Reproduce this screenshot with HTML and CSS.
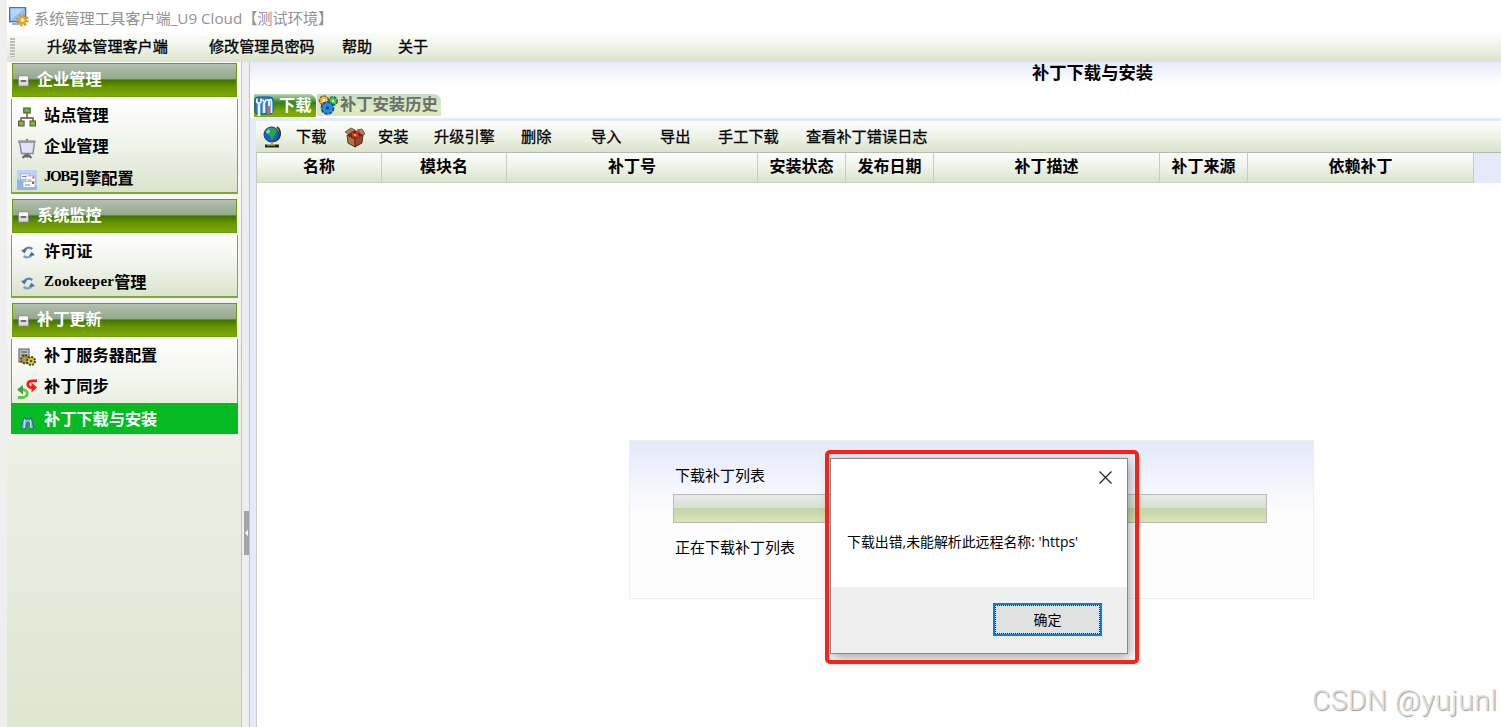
FILE: index.html
```
<!DOCTYPE html>
<html lang="zh-CN">
<head>
  <meta charset="UTF-8">
  <meta name="viewport" content="width=device-width, initial-scale=1.0">
  <title>系统管理工具客户端_U9 Cloud</title>
  <link rel="stylesheet" href="styles.css">
</head>
<body>

  <!-- shared icons -->
  <svg width="0" height="0" class="defs">
    <symbol id="minus" viewBox="0 0 12 12">
      <rect x="0.5" y="0.5" width="11" height="11" fill="#dcdcdc" stroke="#858585"/>
      <rect x="1" y="1" width="10" height="4" fill="#f6f6f6"/>
      <path d="M3 6h6" stroke="#333" stroke-width="1.4"/>
    </symbol>
    <symbol id="refresh" viewBox="0 0 16 14">
      <path d="M3 6C4 2 9 0 13 3" fill="none" stroke="#5b82c4" stroke-width="2.6"/>
      <path d="M0 4l7-1-3 5z" fill="#426cb3"/>
      <path d="M13 8c-1 4-6 6-10 3" fill="none" stroke="#7d9ed4" stroke-width="2.6"/>
      <path d="M16 10l-7 1 3-5z" fill="#426cb3"/>
    </symbol>
  </svg>

  <div class="window">
    <div class="titlebar">
      <svg class="app-icon" viewBox="0 0 20 20">
        <rect x="0.7" y="0.7" width="16" height="14" fill="#8dbcf8" stroke="#4169a8" stroke-width="1.2"/>
        <path d="M1.5 1.5h14L2 13z" fill="#b5d5ff"/>
        <path d="M3 17h8" stroke="#a9b0ba" stroke-width="2"/>
        <circle cx="13.5" cy="13.2" r="5" fill="none" stroke="#d79a12" stroke-width="2.4" stroke-dasharray="2 1.9"/>
        <circle cx="13.5" cy="13.2" r="3.2" fill="#f8dd7c" stroke="#dfa51b" stroke-width="2.2"/>
        <circle cx="13.5" cy="13.2" r="1.3" fill="#fff"/>
      </svg>
      <span>系统管理工具客户端_U9 Cloud【测试环境】</span>
    </div>

    <div class="menubar">
      <i class="grip"></i>
      <span>升级本管理客户端</span>
      <span>修改管理员密码</span>
      <span>帮助</span>
      <span>关于</span>
    </div>

    <div class="main">
      <div class="sidebar">
        <div class="group">
          <div class="group-head"><svg><use href="#minus"/></svg>企业管理</div>
          <div class="group-list">
            <div class="item">
              <svg viewBox="0 0 20 20">
                <rect width="20" height="20" fill="#fff"/>
                <path d="M10 6v5M4 14v-3h12v3" fill="none" stroke="#6b4a3a" stroke-width="1.4"/>
                <rect x="6.7" y="1" width="6.5" height="5" fill="#62b53a" stroke="#5b4a2c"/>
                <rect x="1.6" y="14" width="5.5" height="5" fill="#6cc23f" stroke="#5b4a2c"/>
                <rect x="13" y="14" width="5.5" height="5" fill="#6cc23f" stroke="#5b4a2c"/>
              </svg>
              站点管理
            </div>
            <div class="item">
              <svg viewBox="0 0 20 20">
                <path d="M10 0v2M10 14v3M5.5 19l3.5-3.5M14.5 19L11 15.5M6 17.5h8" stroke="#666" stroke-width="1.8" fill="none"/>
                <path d="M2.5 3h15l-1.5 11.5h-11.5z" fill="#dfe2fb" stroke="#84868f" stroke-width="1.4"/>
                <path d="M1 2.5h17.5" stroke="#9a9ba2" stroke-width="2.4"/>
              </svg>
              企业管理
            </div>
            <div class="item">
              <svg viewBox="0 0 20 20">
                <rect width="20" height="20" fill="#b9d4f5"/>
                <path d="M0 20V9l20 7v4z" fill="#8db5e8"/>
                <rect x="3.5" y="4" width="9" height="5.5" fill="#f3f7fd" stroke="#8da0bd" stroke-width=".6"/>
                <rect x="9" y="6" width="9.5" height="6" fill="#fff" stroke="#8da0bd" stroke-width=".6"/>
                <rect x="6" y="11.5" width="12" height="6" fill="#fbfcff" stroke="#8da0bd" stroke-width=".6"/>
                <path d="M15.5 7.5h2M15 13h2" stroke="#d8442c" stroke-width="1.8"/>
                <path d="M5 6.5h4M10.5 10h4M8 15h5" stroke="#6f87ad"/>
              </svg>
              <span class="tight">JOB</span>引擎配置
            </div>
          </div>
        </div>

        <div class="group">
          <div class="group-head"><svg><use href="#minus"/></svg>系统监控</div>
          <div class="group-list">
            <div class="item"><svg class="small"><use href="#refresh"/></svg>许可证</div>
            <div class="item"><svg class="small"><use href="#refresh"/></svg><span class="latin">Zookeeper</span>管理</div>
          </div>
        </div>

        <div class="group">
          <div class="group-head"><svg><use href="#minus"/></svg>补丁更新</div>
          <div class="group-list open">
            <div class="item">
              <svg viewBox="0 0 20 20">
                <rect x="2" y="2" width="10" height="13" fill="#c3c3c3" stroke="#555"/>
                <path d="M4 5h6M4 8h6" stroke="#444"/>
                <circle cx="8" cy="12.5" r="4" fill="#aaa043" stroke="#4d4612" stroke-width="2" stroke-dasharray="2 1.1"/>
                <circle cx="14" cy="14" r="4" fill="#d8cc50" stroke="#4d4612" stroke-width="2" stroke-dasharray="2 1.1"/>
                <circle cx="14" cy="14" r="1.3" fill="#5b5417"/>
              </svg>
              补丁服务器配置
            </div>
            <div class="item">
              <svg viewBox="0 0 20 20">
                <path d="M20 1.8h-4c-7 0-7 7 0 7" fill="none" stroke="#fb1818" stroke-width="2.8"/>
                <path d="M14.5 3.5l5.5 5-5.500 5z" fill="#fb1818"/>
                <path d="M1 18.500h4c7 0 7-8 0-8" fill="none" stroke="#63c64c" stroke-width="2.800"/>
                <path d="M6 6v9.500L0 10.500z" fill="#3da437"/>
              </svg>
              补丁同步
            </div>
            <div class="item active">
              <svg viewBox="0 0 20 20">
                <path d="M4.500 18l1-7 2-5 2 3 1-2 2 2 1-3 2 5 1 7h-3l-1-6-1.500-1-1.500 1-1 6z" fill="#8fb0e2" stroke="#315f9d"/>
                <path d="M7.500 9v8M13.500 9v8" stroke="#c6d8f5" stroke-width="1.200"/>
              </svg>
              补丁下载与安装
            </div>
          </div>
        </div>
      </div>

      <div class="splitter"><div class="handle"></div></div>

      <div class="content">
        <div class="top">
          <h1>补丁下载与安装</h1>
          <div class="tabs">
            <div class="tab selected">
              <svg viewBox="0 0 20 20">
                <rect x="1" y="1" width="18" height="17" rx="3" fill="#247bd5" stroke="#0c56b2"/>
                <path d="M5 7v13M10 7v10" stroke="#eef4fb" stroke-width="2.6"/>
                <path d="M2.800 2.500v3.500l2 1.500L7 6V2.500M8.500 3.500l2 3 2-3M13 4h5" fill="none" stroke="#eef4fb" stroke-width="1.800"/>
                <path d="M15 4v6M17.500 5v12" stroke="#fff" stroke-width="1.800"/>
                <path d="M14.500 10v8" stroke="#ef5927" stroke-width="3"/>
              </svg>
              <span>下载</span>
            </div>
            <div class="tab">
              <svg viewBox="0 0 20 20">
                <circle cx="6" cy="5.500" r="4.500" fill="#f5bd4b" stroke="#7e652a" stroke-width="1.600" stroke-dasharray="3 1"/>
                <circle cx="15" cy="6" r="4.200" fill="#51c44c" stroke="#267a39" stroke-width="1.600" stroke-dasharray="3 1"/>
                <circle cx="9.500" cy="13" r="6" fill="#2e8ce0" stroke="#11519d" stroke-width="1.800" stroke-dasharray="3.500 1"/>
                <circle cx="9.500" cy="13" r="1.800" fill="#0e468b"/>
                <circle cx="6" cy="5.500" r="1.300" fill="#fff0b6"/>
                <circle cx="15" cy="6" r="1.200" fill="#c8f5c2"/>
              </svg>
              <span>补丁安装历史</span>
            </div>
          </div>
        </div>

        <div class="pane">
          <div class="toolbar">
            <svg viewBox="0 0 20 22">
              <path d="M14 1c5 4 4 13-3 14" fill="none" stroke="#3d3a28" stroke-width="1.800"/>
              <circle cx="8.500" cy="8.500" r="7.500" fill="#1560c4" stroke="#123c78"/>
              <path d="M5 2c4-1 8 0 9 3l-3 5-2 4-2-4-4-3z" fill="#2fa445"/>
              <path d="M3 5l3-2 1 3-3 2z" fill="#62dcf2"/>
              <path d="M9 16v3" stroke="#caa42c" stroke-width="2.500"/>
              <path d="M2 20h14" stroke="#242424" stroke-width="3"/>
              <path d="M4 19h8" stroke="#e2ca4f"/>
            </svg>
            <span>下载</span>
            <svg viewBox="0 0 20 22">
              <path d="M2 9l8 4v8l-7-4z" fill="#b1713e" stroke="#57321b"/>
              <path d="M10 13l8-4-1 8-7 4z" fill="#8a4e28" stroke="#57321b"/>
              <path d="M2 9l8-5 8 5-8 4z" fill="#6d2518"/>
              <path d="M0 6l6-4 4 2-7 4zM12 4l5-1 3 5-3 1z" fill="#b98055" stroke="#70432a" stroke-width=".8"/>
              <path d="M6 5l4 3 5-5-2 6 2 2-5 1-3-2z" fill="#d92b22"/>
              <circle cx="10" cy="9" r="1.300" fill="#f7b23c"/>
            </svg>
            <span>安装</span>
            <span>升级引擎</span>
            <span>删除</span>
            <span>导入</span>
            <span>导出</span>
            <span>手工下载</span>
            <span>查看补丁错误日志</span>
          </div>

          <div class="grid-head">
            <div>名称</div>
            <div>模块名</div>
            <div>补丁号</div>
            <div>安装状态</div>
            <div>发布日期</div>
            <div>补丁描述</div>
            <div>补丁来源</div>
            <div>依赖补丁</div>
          </div>

          <div class="grid-body">
            <div class="progress">
              <p>下载补丁列表</p>
              <div class="bar"></div>
              <p>正在下载补丁列表</p>
            </div>
          </div>
        </div>
      </div>
    </div>
  </div>

  <!-- error message box -->
  <div class="dialog">
    <div class="dialog-body">
      <svg class="close" viewBox="0 0 13 13"><path d="M.5.5l12 12M12.500.5l-12 12" stroke="#222" stroke-width="1.200"/></svg>
      <p>下载出错,未能解析此远程名称: 'https'</p>
    </div>
    <div class="dialog-foot"><button><span>确定</span></button></div>
  </div>
  <div class="mark"></div>

  <div class="watermark">CSDN @yujunl</div>

</body>
</html>
```
FILE: styles.css
```
* {
  box-sizing: border-box;
}
body {
  margin: 0;
  height: 727px;
  overflow: hidden;
  position: relative;
  background: #efefef;
  color: #000;
  font-family: "Liberation Sans", "Noto Sans CJK SC", sans-serif;
  font-size: 15px;
}
p, h1 {
  margin: 0;
}
.defs {
  position: absolute;
}
.window {
  display: flex;
  flex-direction: column;
  height: 727px;
  margin-left: 7px;
  background: #fff;
}

/* title and menu */
.titlebar {
  display: flex;
  align-items: center;
  height: 33px;
  padding: 0 0 0 2px;
  color: #929292;
  font-family: "Open Sans", "Noto Sans CJK SC", sans-serif;
  font-size: 15.2px;
  white-space: nowrap;
}
.app-icon {
  width: 20px;
  height: 20px;
  margin-right: 5px;
}
.menubar {
  display: grid;
  grid-template-columns: 37px 162px 133px 56px 60px;
  align-items: center;
  height: 29px;
  padding: 0 0 5px 3px;
  background: linear-gradient(#fdfefc, #eef2e8 50%, #dae3cb);
  font-size: 15.1px;
  -webkit-text-stroke: .35px #000;
  white-space: nowrap;
}
.grip {
  width: 5px;
  height: 19px;
  margin-top: 4px;
  background: repeating-linear-gradient(#bcbdb9 0 2px, transparent 2px 3px);
}

/* left navigation */
.main {
  display: flex;
  flex: 1;
}
.sidebar {
  width: 234px;
  padding: 1px 3px 0 4px;
  background: linear-gradient(#fcfdfb, #eff2e9 50%, #dee6d0);
}
.group {
  margin-bottom: 5px;
}
.group-head {
  display: flex;
  align-items: center;
  width: 225px;
  height: 34px;
  margin: 0 1px 2px;
  padding: 0 0 4px 5px;
  border: 1px solid #6d9d0a;
  background: linear-gradient(#b3c0b0, #94a98c 46%, #3f7200 50%, #659500 72%, #80aa09);
  color: #fff;
  font-size: 16.2px;
  font-weight: bold;
}
.group-head svg {
  width: 11px;
  height: 12px;
  margin: 5px 8px 0 0;
}
.group-list {
  height: 95px;
  width: 227px;
  border: 2px solid #82a83a;
  border-width: 0 1.5px 2px;
  background: linear-gradient(#fff, #f0f3eb 50%, #dae4cc);
}
.group:nth-child(2) .group-list {
  height: 63px;
}
.item {
  display: flex;
  align-items: center;
  height: 31.5px;
  padding: 0 0 2px 5px;
  font-family: "Liberation Serif", "Noto Sans CJK SC", serif;
  font-size: 16.2px;
  font-weight: bold;
  white-space: nowrap;
}
.item svg {
  width: 20px;
  height: 20px;
  margin: 7px 7px 0 0;
}
.item svg.small {
  width: 14px;
  height: 13px;
  margin: 5px 9px 0 4px;
}
.tight {
  width: 25px;
  font-size: 15px;
  letter-spacing: -1.5px;
}
.latin {
  font-size: 15px;
  letter-spacing: .2px;
}
.group-list.open {
  border-bottom: 0;
}
.item.active {
  height: 31px;
  margin: 1px -1px 0;
  padding-left: 6px;
  background: #05bb21;
  color: #fff;
}

/* splitter */
.splitter {
  width: 9px;
  padding: 449px 0 0 2px;
  border-left: 1px solid #c3c6c0;
  border-right: 1px solid #c4c4c4;
  background: #eee;
}
.handle {
  width: 5px;
  height: 44px;
  padding-top: 19px;
  background: #a5a5a5;
}
.handle::after {
  content: "";
  display: block;
  width: 0;
  border: 3px solid transparent;
  border-right-color: #fff;
  margin-left: -2px;
}

/* right side */
.content {
  flex: 1;
  min-width: 0;
}
.top {
  height: 56px;
  background: linear-gradient(#e5eafb, #fff 22px);
}
h1 {
  height: 31px;
  padding-left: 782px;
  font-size: 17.3px;
  line-height: 22px;
  white-space: nowrap;
}
.tabs {
  display: flex;
  padding: 1px 0 0 4px;
}
.tab {
  display: flex;
  align-items: center;
  width: 124px;
  height: 22px;
  padding-left: 1px;
  border-radius: 0 7px 0 0;
  background: linear-gradient(#c5dcc6, #dcebc4 60%, #dbe9b5);
  color: #6b6e6a;
  font-size: 16.3px;
  font-weight: bold;
  white-space: nowrap;
}
.tab svg {
  width: 20px;
  height: 20px;
  margin-right: 2px;
}
.tab span {
  margin-top: -4px;
}
.tab.selected {
  width: 62px;
  height: 23px;
  margin-right: 1px;
  padding-left: 0;
  background: linear-gradient(#bcd6b5, #2f8218 38%, #77a700 75%, #82ad09);
  color: #fff;
}
.tab.selected svg {
  margin-right: 5px;
}
.pane {
  height: 609px;
  padding: 3px 0 0 6px;
  background: #e5eafb;
}
.toolbar {
  display: grid;
  grid-template-columns: 33px 49px 33px 56px 87px 70px 69px 58px 88px 130px;
  align-items: center;
  height: 32px;
  padding: 0 0 3px 7px;
  border-bottom: 1px solid #b7bab0;
  background: linear-gradient(#fcfdfb, #eef2e8 50%, #dae3cb);
  font-size: 15.2px;
  -webkit-text-stroke: .3px #000;
  white-space: nowrap;
}
.toolbar svg {
  width: 20px;
  height: 22px;
  margin-top: 4px;
}
.grid-head {
  display: grid;
  grid-template-columns: 126px 125px 251px 88px 88px 226px 88px 226px;
  width: 1218px;
  height: 30px;
}
.grid-head div {
  border-right: 1px solid #c6cdba;
  border-bottom: 1px solid #c9d2bd;
  background: linear-gradient(#fcfdfb, #eef2e8 50%, #dae3cb);
  font-size: 16px;
  font-weight: bold;
  line-height: 28px;
  text-align: center;
}
.grid-head div:first-child {
  border-left: 1px solid #c6cdba;
}
.grid-body {
  display: flow-root;
  height: 544px;
  border-left: 1px solid #ccc;
  background: #fefefe;
}

/* download progress */
.progress {
  width: 685px;
  height: 159px;
  margin: 257px 0 0 372px;
  padding: 22px 0 0 44px;
  border: 1px solid #efefef;
  background: linear-gradient(#e3e9fa, #f7f8fe 33%, #fdfdfe 46%, #fdfdfd);
}
.progress p {
  padding-left: 1px;
  line-height: 26px;
}
.bar {
  width: 594px;
  height: 29px;
  margin: 5px 0 12px -1px;
  border: 1px solid #b8bbb8;
  background: linear-gradient(#e8eae8, #d8e0d3 47%, #c4d5ac 50%, #d9e6b2);
}

.dialog {
  position: absolute;
  left: 830px;
  top: 458px;
  width: 298px;
  height: 196px;
  border: 1px solid #85868b;
  background: #fff;
  box-shadow: 2px 4px 12px rgba(0, 0, 0, .35);
}
.dialog-body {
  height: 128px;
  padding: 12px 15px 0 16px;
  font-family: "Open Sans", "Noto Sans CJK SC", sans-serif;
  font-size: 13.9px;
}
.dialog-body p {
  margin-top: 47px;
  line-height: 22px;
  white-space: nowrap;
}
.close {
  display: block;
  width: 13px;
  height: 13px;
  margin-left: auto;
}
.dialog-foot {
  display: flex;
  justify-content: flex-end;
  height: 66px;
  padding: 16px 25px 0 0;
  background: #efefef;
}
button {
  width: 109px;
  height: 33px;
  padding: 0;
  border: 2px solid #0f7bd8;
  background: #e1e1e1;
  font-family: "Noto Sans CJK SC", sans-serif;
  font-size: 14px;
}
button span {
  display: block;
  height: 29px;
  border: 1px dotted #222;
  line-height: 26px;
}
/* red outline round the message box */
.mark {
  position: absolute;
  left: 825px;
  top: 450px;
  width: 314px;
  height: 214px;
  border: 4px solid #fd2015;
  border-radius: 5px;
}
.watermark {
  position: absolute;
  left: 1312px;
  top: 684px;
  color: #dedede;
  font-family: Roboto, sans-serif;
  font-size: 28px;
  font-weight: 300;
  letter-spacing: .65px;
  line-height: 34px;
  text-shadow: 1px 1px 1px #999;
  white-space: nowrap;
}
```
